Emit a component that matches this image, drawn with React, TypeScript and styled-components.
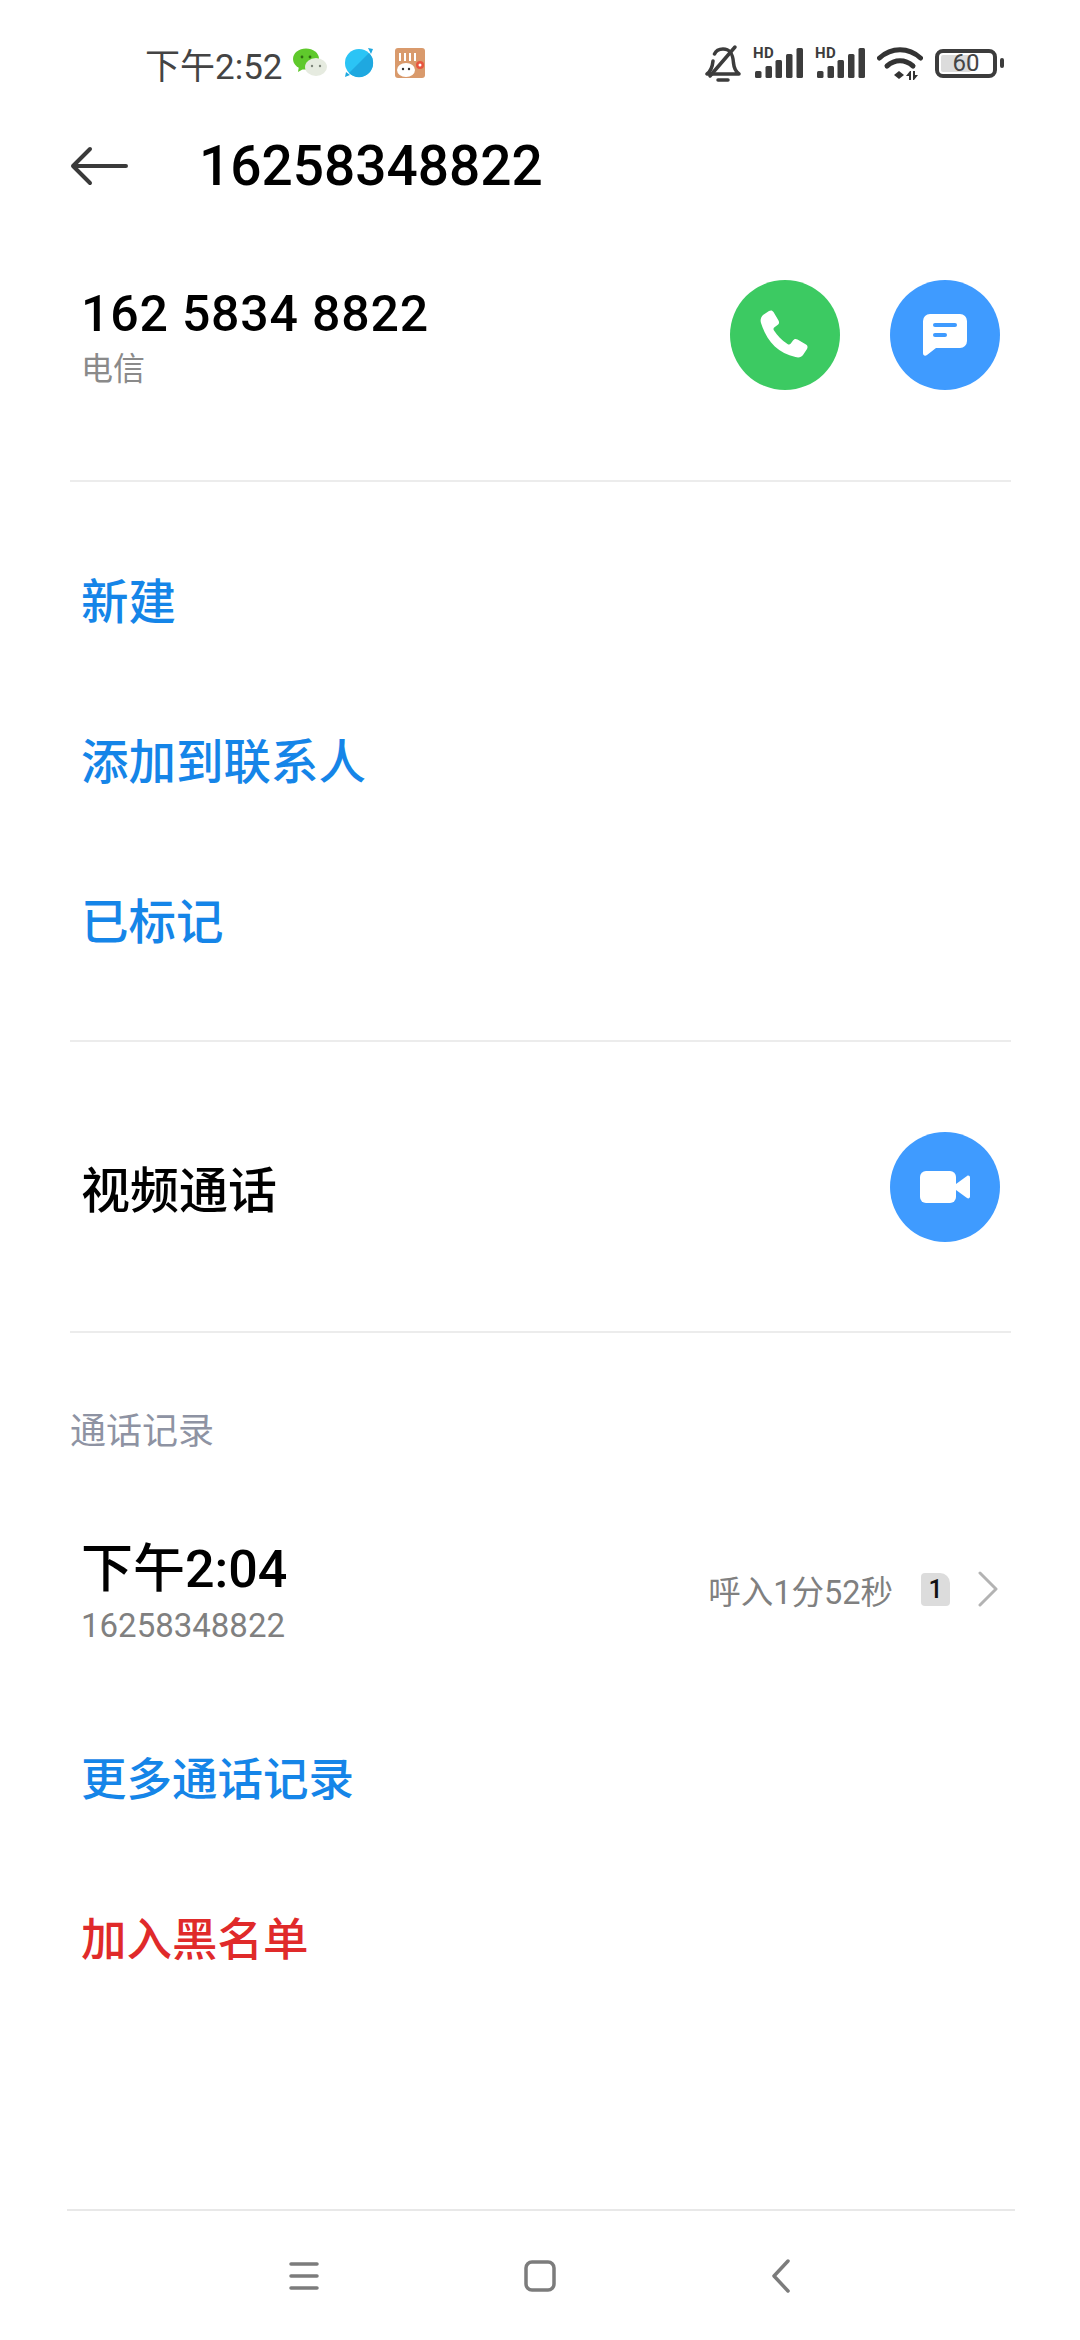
import styled, { createGlobalStyle } from "styled-components";

const GlobalStyle = createGlobalStyle`
  html, body {
    margin: 0;
    padding: 0;
    background: #fff;
  }
  body {
    font-family: Roboto, "Noto Sans CJK SC", sans-serif;
  }
`;

const actions = ["新建", "添加到联系人", "已标记"];

const SignalIcon = () => (
  <SignalWrap>
    <HdLabel>HD</HdLabel>
    <svg width="50" height="36" viewBox="0 0 50 36">
      <rect x="2" y="26" width="6.500" height="7" rx="1.500" fill="#3c3c3c" />
      <rect x="12.500" y="21" width="6.500" height="12" rx="1.500" fill="#3c3c3c" />
      <rect x="22.500" y="15" width="6.500" height="18" rx="1.500" fill="#3c3c3c" />
      <rect x="33" y="9" width="6.500" height="24" rx="1.500" fill="#3c3c3c" />
      <rect x="43.500" y="3" width="6.500" height="30" rx="1.500" fill="#3c3c3c" />
    </svg>
  </SignalWrap>
);

const App = () => {
  return (
    <Page>
      <GlobalStyle />
      <StatusBar>
        <StatusLeft>
          <Time>下午2:52</Time>
          <svg width="34" height="30" viewBox="0 0 34 30">
            <ellipse cx="13" cy="11" rx="13" ry="10.500" fill="#5fc92c" />
            <path d="M6 18l-1 6 7-4z" fill="#5fc92c" />
            <ellipse cx="23" cy="19" rx="11" ry="9" fill="#e6ebe0" />
            <circle cx="9" cy="9" r="1.400" fill="#2f6f12" />
            <circle cx="17" cy="9" r="1.400" fill="#2f6f12" />
            <circle cx="19" cy="18" r="1.200" fill="#7d857a" />
            <circle cx="27" cy="18" r="1.200" fill="#7d857a" />
          </svg>
          <BallIcon width="30" height="30" viewBox="0 0 30 30">
            <circle cx="15" cy="15" r="14" fill="#2bc4f5" />
            <path d="M25 5L5 25a14 14 0 0 0 20-20z" fill="#1fa8e0" />
            <path d="M24 0l5 1-2 5zM1 29l1-5 4 3z" fill="#1fa8e0" />
          </BallIcon>
          <svg width="30" height="30" viewBox="0 0 30 30">
            <rect width="30" height="30" rx="3" fill="#d99a6c" />
            <path d="M5 5v8M10 5v8M15 5v8M20 5v8" stroke="#fff" strokeWidth="2" />
            <ellipse cx="11" cy="22" rx="9" ry="7" fill="#fff" />
            <circle cx="8" cy="21" r="1.200" fill="#333" />
            <circle cx="14" cy="21" r="1.200" fill="#333" />
            <circle cx="25" cy="17" r="4" fill="#e8553f" />
            <circle cx="25" cy="17" r="1.500" fill="#fff" />
          </svg>
        </StatusLeft>
        <StatusRight>
          <svg width="36" height="38" viewBox="0 0 36 38" fill="none" stroke="#3c3c3c" strokeWidth="3.500" strokeLinecap="round" strokeLinejoin="round">
            <path d="M2 30h32c-4-3-5-6-5.500-11-.5-7-2-14-10.500-14-4 0-7 1.500-8.500 5M8 17c-.5 5-2 10-6 13" />
            <path d="M5 32L30 3" />
            <path d="M13 36h10" />
          </svg>
          <SignalIcon />
          <SignalIcon />
          <svg width="46" height="36" viewBox="0 0 46 36" fill="none">
            <path d="M2.500 13c12-11 29-11 41 0" stroke="#333" strokeWidth="5" strokeLinecap="round" />
            <path d="M10 21c8-7 18-7 26 0" stroke="#333" strokeWidth="5" strokeLinecap="round" />
            <path d="M17 30l5-4 5 4-5 4z" fill="#333" />
            <path d="M33 26l-4 5h3v4h2v-9zM37 35l4-5h-3v-4h-2v9z" fill="#333" />
          </svg>
          <Battery>
            <BatteryBody>
              <BatteryFill />
              <BatteryText>60</BatteryText>
            </BatteryBody>
            <BatteryTip />
          </Battery>
        </StatusRight>
      </StatusBar>

      <Header>
        <svg width="58" height="40" viewBox="0 0 58 40" fill="none" stroke="#3a3a3a" strokeWidth="4" strokeLinecap="round" strokeLinejoin="round">
          <path d="M20 3L3 20l17 17M3 20h53" />
        </svg>
        <Title>16258348822</Title>
      </Header>

      <NumberRow>
        <div>
          <PhoneNumber>162 5834 8822</PhoneNumber>
          <SubText>电信</SubText>
        </div>
        <RoundButtons>
          <RoundButton $color="#3cca62">
            <svg width="50" height="50" viewBox="0 0 50 50">
              <path d="M3 5l6-4c2-1 3.500-.5 4.500 1l5 8.500c1 2 .5 3.500-1 4.500l-3 2.200c-1.200 1-1.300 2-.5 3.300 3.500 5.500 7.500 9.500 13.500 13.500 1.300.8 2.300.7 3.300-.5l2.200-3c1-1.500 2.500-2 4.500-1l8.500 5c1.500 1 2 2.500 1 4.500l-4 6c-1.500 2-4 3-7.500 2C18 43 7 32 1 13 0 10 1 7 3 5z" fill="#fff" />
            </svg>
          </RoundButton>
          <RoundButton $color="#3f9bff">
            <svg width="44" height="42" viewBox="0 0 44 42">
              <path d="M7 0h30a7 7 0 0 1 7 7v20a7 7 0 0 1-7 7H13L4 41c-2 1.500-4 .5-4-2V7a7 7 0 0 1 7-7z" fill="#fff" />
              <rect x="10" y="9" width="24" height="4" rx="2" fill="#3f9bff" />
              <rect x="10" y="19" width="14" height="4" rx="2" fill="#3f9bff" />
            </svg>
          </RoundButton>
        </RoundButtons>
      </NumberRow>

      <Divider />

      <ActionList $size={47.5}>
        {actions.map((label) => (
          <ActionItem key={label}>{label}</ActionItem>
        ))}
      </ActionList>

      <Divider />

      <VideoRow>
        <VideoLabel>视频通话</VideoLabel>
        <RoundButton $color="#3f9bff">
          <svg width="50" height="32" viewBox="0 0 50 32">
            <rect x="0" y="0" width="36" height="32" rx="6" fill="#fff" />
            <path d="M36 13l11-8c1.500-1 3 0 3 1.500v19c0 1.500-1.500 2.500-3 1.500l-11-8z" fill="#fff" />
          </svg>
        </RoundButton>
      </VideoRow>

      <Divider />

      <SectionTitle>通话记录</SectionTitle>

      <CallRow>
        <div>
          <CallTime>下午2:04</CallTime>
          <CallNumber>16258348822</CallNumber>
        </div>
        <CallMeta>
          <CallInfo>呼入1分52秒</CallInfo>
          <SimBadge>1</SimBadge>
          <svg width="20" height="36" viewBox="0 0 20 36" fill="none" stroke="#b3b3b3" strokeWidth="3" strokeLinecap="round" strokeLinejoin="round">
            <path d="M2 2l16 16L2 34" />
          </svg>
        </CallMeta>
      </CallRow>

      <ActionList $size={45.5} $tail>
        <ActionItem>更多通话记录</ActionItem>
        <ActionItem $danger>加入黑名单</ActionItem>
      </ActionList>

      <Spacer />

      <NavBar>
        <svg width="30" height="32" viewBox="0 0 30 32" fill="none" stroke="#7c7c7c" strokeWidth="3.500" strokeLinecap="round">
          <path d="M2 4h26M2 16h26M2 28h26" />
        </svg>
        <svg width="32" height="32" viewBox="0 0 32 32" fill="none" stroke="#7c7c7c" strokeWidth="3.500">
          <rect x="2" y="2" width="28" height="28" rx="6" />
        </svg>
        <BackIcon width="20" height="34" viewBox="0 0 20 34" fill="none" stroke="#7c7c7c" strokeWidth="3.500" strokeLinecap="round" strokeLinejoin="round">
          <path d="M17 2L3 17l14 15" />
        </BackIcon>
      </NavBar>
    </Page>
  );
};

const Page = styled.div`
  width: 1080px;
  height: 2340px;
  display: flex;
  flex-direction: column;
  background: #fff;
  overflow: hidden;
`;

const StatusBar = styled.div`
  height: 66px;
  padding: 30px 76px 0 145px;
  display: flex;
  align-items: center;
  justify-content: space-between;
`;

const StatusLeft = styled.div`
  display: flex;
  align-items: center;
  gap: 10px;
`;

const BallIcon = styled.svg`
  margin-left: 7px;
  margin-right: 11px;
`;

const Time = styled.span`
  font-size: 35px;
  color: #444;
`;

const StatusRight = styled.div`
  display: flex;
  align-items: center;
  gap: 12px;
`;

const SignalWrap = styled.div`
  position: relative;
  width: 50px;
  height: 36px;
`;

const HdLabel = styled.span`
  position: absolute;
  left: 0;
  top: 1px;
  font-size: 15px;
  line-height: 15px;
  font-weight: 700;
  letter-spacing: 0.5px;
  color: #3c3c3c;
`;

const Battery = styled.div`
  display: flex;
  align-items: center;
  gap: 3px;
`;

const BatteryBody = styled.div`
  position: relative;
  width: 62px;
  height: 29px;
  box-sizing: border-box;
  border: 4px solid #3c3c3c;
  border-radius: 8px;
  padding: 2px;
`;

const BatteryFill = styled.div`
  width: 60%;
  height: 100%;
  background: #dcdcdc;
  border-radius: 2px;
`;

const BatteryText = styled.span`
  position: absolute;
  inset: 0;
  display: flex;
  align-items: center;
  justify-content: center;
  font-size: 24px;
  color: #444;
`;

const BatteryTip = styled.div`
  width: 4px;
  height: 10px;
  background: #3c3c3c;
  border-radius: 2px;
`;

const Header = styled.div`
  height: 134px;
  box-sizing: border-box;
  padding: 5px 0 0 70px;
  display: flex;
  align-items: center;
  gap: 71px;
`;

const Title = styled.h1`
  margin: 0;
  font-size: 55px;
  font-weight: 500;
  color: #000;
`;

const NumberRow = styled.div`
  height: 250px;
  padding: 50px 80px 0 81px;
  box-sizing: border-box;
  display: flex;
  justify-content: space-between;
`;

const PhoneNumber = styled.div`
  font-size: 50px;
  font-weight: 500;
  line-height: 62px;
  letter-spacing: 0.8px;
  color: #000;
  margin: 3px 0 2px;
`;

const SubText = styled.div`
  font-size: 32px;
  line-height: 44px;
  color: #8a8a8a;
`;

const RoundButtons = styled.div`
  display: flex;
  gap: 50px;
`;

const RoundButton = styled.div<{ $color: string }>`
  width: 110px;
  height: 110px;
  border-radius: 50%;
  background: ${(p) => p.$color};
  display: flex;
  align-items: center;
  justify-content: center;
`;

const Divider = styled.div`
  height: 2px;
  margin: 0 69px 0 70px;
  background: #ececec;
`;

const ActionList = styled.div<{ $size: number; $tail?: boolean }>`
  display: flex;
  flex-direction: column;
  padding: ${(p) => (p.$tail ? "47px 0 38px" : "36px 0 42px")};
  font-size: ${(p) => p.$size}px;
`;

const ActionItem = styled.div<{ $danger?: boolean }>`
  height: 160px;
  padding-left: 81px;
  display: flex;
  align-items: center;
  font-weight: 500;
  color: ${(p) => (p.$danger ? "#e02a2a" : "#1585e8")};
`;

const VideoRow = styled.div`
  height: 289px;
  padding: 0 80px 0 81px;
  display: flex;
  align-items: center;
  justify-content: space-between;
`;

const VideoLabel = styled.div`
  font-size: 49px;
  font-weight: 500;
  color: #000;
`;

const SectionTitle = styled.div`
  padding: 76px 0 0 70px;
  font-size: 36px;
  line-height: 46px;
  color: #8e93a3;
`;

const CallRow = styled.div`
  padding: 82px 82px 0 81px;
  display: flex;
  align-items: center;
  justify-content: space-between;
`;

const CallTime = styled.div`
  font-size: 52px;
  font-weight: 500;
  line-height: 65px;
  color: #000;
`;

const CallNumber = styled.div`
  font-size: 33px;
  line-height: 47px;
  color: #808080;
`;

const CallMeta = styled.div`
  display: flex;
  align-items: center;
  gap: 28px;
  padding-bottom: 8px;
`;

const CallInfo = styled.span`
  font-size: 32.500px;
  color: #808080;
`;

const SimBadge = styled.span`
  width: 29px;
  height: 33px;
  background: #dcdcdc;
  border-radius: 4px 10px 4px 4px;
  display: flex;
  align-items: center;
  justify-content: center;
  font-size: 25px;
  font-weight: 500;
  color: #111;
`;

const Spacer = styled.div`
  flex: 1;
`;

const NavBar = styled.div`
  height: 129px;
  margin: 0 65px 0 67px;
  border-top: 2px solid #e8e8e8;
  padding-left: 222px;
  display: flex;
  align-items: center;
  gap: 205px;
`;

const BackIcon = styled.svg`
  margin-left: 10px;
`;

export default App;
